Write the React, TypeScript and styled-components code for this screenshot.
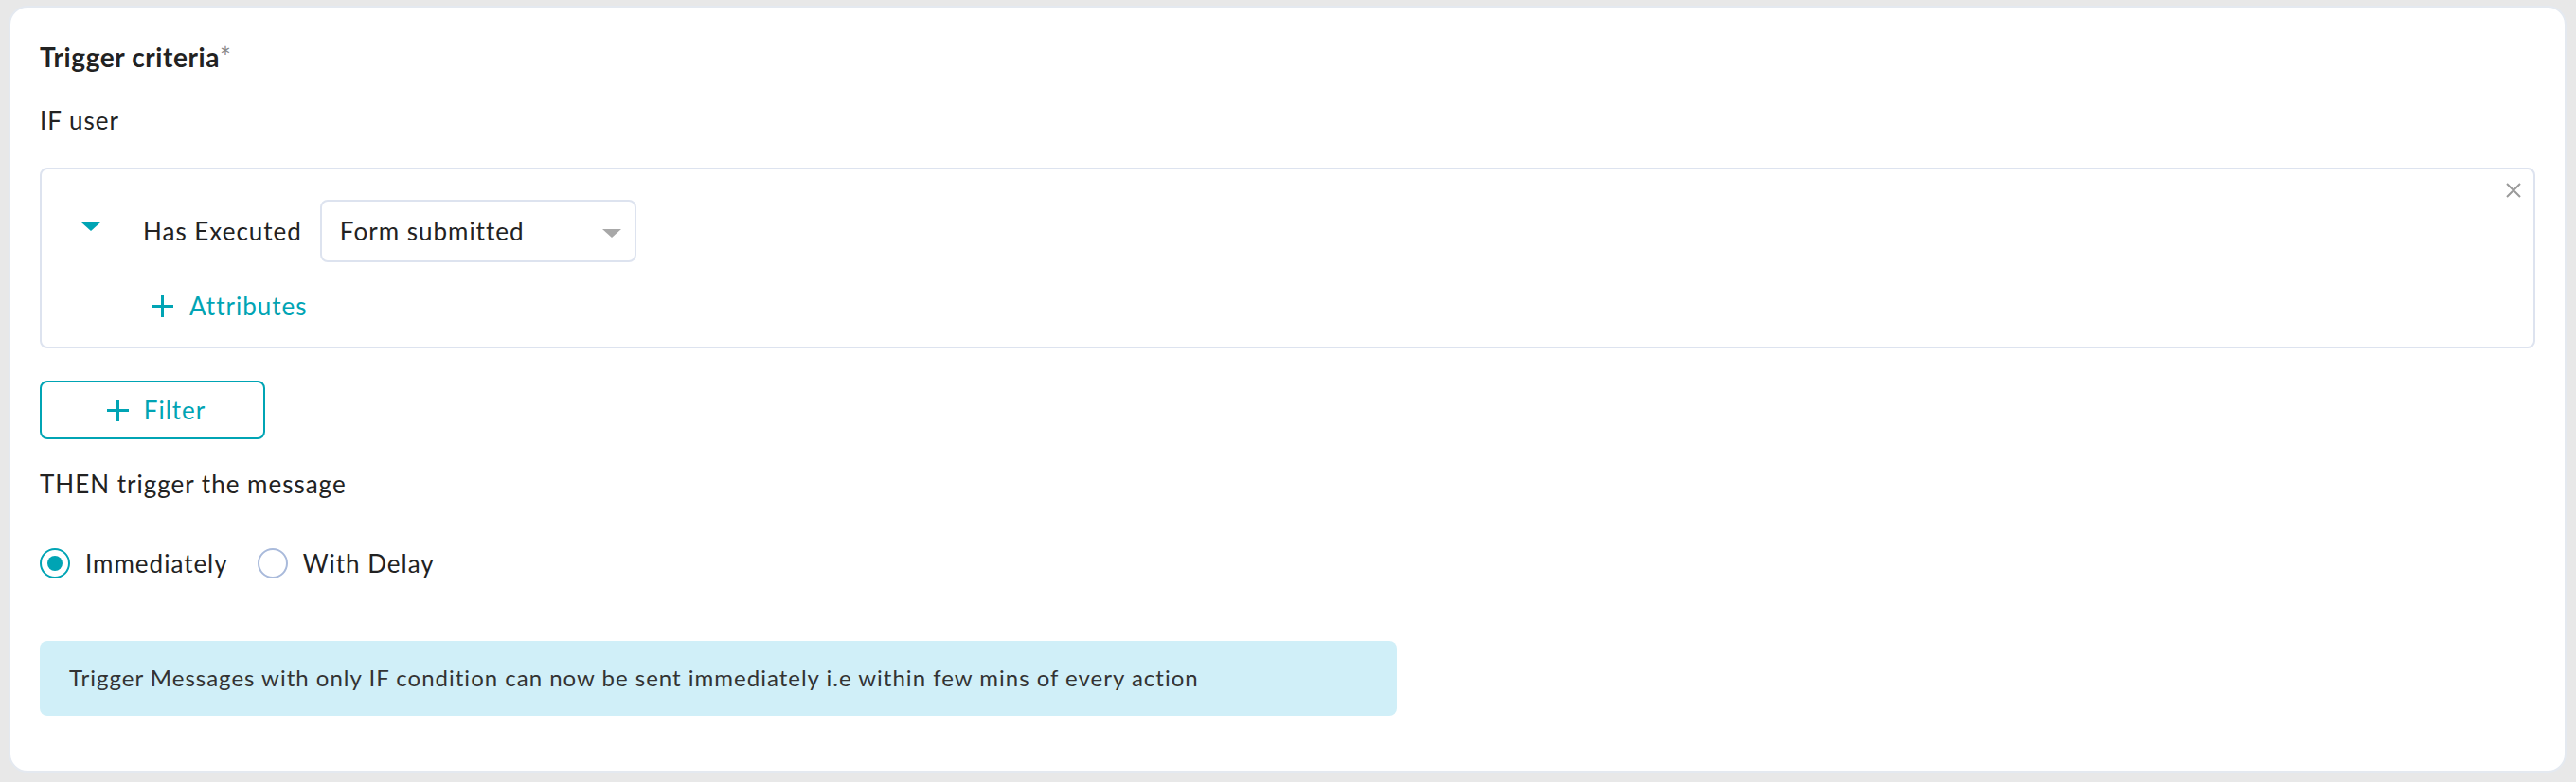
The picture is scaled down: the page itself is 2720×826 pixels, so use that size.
import React from "react";
import styled, { createGlobalStyle } from "styled-components";

const teal = "#00a4b4";
const ink = "#222222";
const line = "#dde3ef";

const GlobalStyle = createGlobalStyle`
  html, body {
    margin: 0;
    padding: 0;
    background: #e8e8e8;
  }
  body {
    font-family: Lato, "Liberation Sans", sans-serif;
    letter-spacing: 1px;
    color: ${ink};
  }
`;

const Page = styled.div`
  padding: 6px 10px 10px 9px;
`;

const Card = styled.section`
  background: #ffffff;
  border: 2px solid #e4e9f0;
  border-radius: 20px;
  padding: 36px 31px 58px 31px;
`;

const Title = styled.h2`
  margin: 0;
  font-size: 28px;
  line-height: 32px;
  font-weight: 700;
  letter-spacing: 0.6px;
  color: ${ink};
`;

const Required = styled.span`
  font-weight: 400;
  color: #8a8a8a;
`;

const Label = styled.div<{ $gap?: number }>`
  margin-top: ${(p) => p.$gap ?? 0}px;
  font-size: 26px;
  line-height: 32px;
`;

const ConditionBox = styled.div`
  position: relative;
  margin-top: 34px;
  border: 2px solid ${line};
  border-radius: 8px;
  padding: 32px 0 27px 42px;
`;

const ConditionRow = styled.div`
  display: flex;
  align-items: center;
  height: 66px;
`;

const Caret = styled.svg`
  width: 20px;
  height: 9px;
  margin-top: -10px;
  flex-shrink: 0;
`;

const RowLabel = styled.span`
  margin-left: 45px;
  font-size: 26px;
  line-height: 32px;
`;

const Select = styled.div`
  margin-left: 19px;
  width: 334px;
  height: 66px;
  box-sizing: border-box;
  border: 2px solid ${line};
  border-radius: 8px;
  display: flex;
  align-items: center;
  justify-content: space-between;
  padding: 0 14px 0 19px;
  font-size: 26px;
  line-height: 32px;
  background: #ffffff;
`;

const SelectCaret = styled.svg`
  width: 20px;
  height: 9px;
  margin-top: 4px;
`;

const AttributesRow = styled.div`
  display: flex;
  align-items: center;
  margin-top: 30px;
  padding-left: 74px;
  height: 32px;
  color: ${teal};
  font-size: 26px;
  line-height: 32px;
`;

const PlusIcon = styled.svg`
  width: 23px;
  height: 23px;
  flex-shrink: 0;
`;

const LinkText = styled.span`
  margin-left: 17px;
`;

const CloseButton = styled.svg`
  position: absolute;
  top: 14px;
  right: 13px;
  width: 16px;
  height: 16px;
`;

const FilterButton = styled.button`
  margin-top: 34px;
  width: 238px;
  height: 62px;
  box-sizing: border-box;
  border: 2px solid ${teal};
  border-radius: 8px;
  background: #ffffff;
  color: ${teal};
  display: flex;
  align-items: center;
  justify-content: center;
  gap: 16px;
  padding: 0 0 0 8px;
  font-family: inherit;
  letter-spacing: inherit;
  font-size: 26px;
  line-height: 32px;
  cursor: pointer;
`;

const RadioGroup = styled.div`
  margin-top: 52px;
  display: flex;
  align-items: center;
  height: 32px;
`;

const RadioOption = styled.label`
  display: flex;
  align-items: center;
  font-size: 26px;
  line-height: 32px;
  margin-right: 31px;
  cursor: pointer;
`;

const RadioCircle = styled.span<{ $checked?: boolean }>`
  width: 32px;
  height: 32px;
  box-sizing: border-box;
  border-radius: 50%;
  border: 2.5px solid ${(p) => (p.$checked ? teal : "#a9badb")};
  display: flex;
  align-items: center;
  justify-content: center;
  margin-right: 16px;
  &::after {
    content: "";
    display: ${(p) => (p.$checked ? "block" : "none")};
    width: 16px;
    height: 16px;
    border-radius: 50%;
    background: ${teal};
  }
`;

const InfoBanner = styled.div`
  margin-top: 66px;
  width: 1433px;
  height: 79px;
  box-sizing: border-box;
  background: #d0eff8;
  border-radius: 8px;
  display: flex;
  align-items: center;
  padding: 0 0 2px 31px;
  font-size: 24px;
  line-height: 30px;
  color: #333333;
`;

const Plus = () => (
  <PlusIcon viewBox="0 0 23 23">
    <path d="M11.5 0v23M0 11.5h23" stroke={teal} strokeWidth="3" fill="none" />
  </PlusIcon>
);

const App = () => {
  return (
    <Page>
      <GlobalStyle />
      <Card>
        <Title>
          Trigger criteria<Required>*</Required>
        </Title>
        <Label $gap={35}>IF user</Label>

        <ConditionBox>
          <CloseButton viewBox="0 0 16 16">
            <path d="M1 1l14 14M15 1L1 15" stroke="#9a9a9a" strokeWidth="2" fill="none" />
          </CloseButton>
          <ConditionRow>
            <Caret viewBox="0 0 20 9">
              <path d="M0 0h20L10 9z" fill={teal} />
            </Caret>
            <RowLabel>Has Executed</RowLabel>
            <Select>
              <span>Form submitted</span>
              <SelectCaret viewBox="0 0 20 9">
                <path d="M0 0h20L10 9z" fill="#a8a8a8" />
              </SelectCaret>
            </Select>
          </ConditionRow>
          <AttributesRow>
            <Plus />
            <LinkText>Attributes</LinkText>
          </AttributesRow>
        </ConditionBox>

        <FilterButton>
          <Plus />
          <span>Filter</span>
        </FilterButton>

        <Label $gap={31}>THEN trigger the message</Label>

        <RadioGroup>
          <RadioOption>
            <RadioCircle $checked />
            Immediately
          </RadioOption>
          <RadioOption>
            <RadioCircle />
            With Delay
          </RadioOption>
        </RadioGroup>

        <InfoBanner>
          Trigger Messages with only IF condition can now be sent immediately i.e within few mins of every action
        </InfoBanner>
      </Card>
    </Page>
  );
};

export default App;
